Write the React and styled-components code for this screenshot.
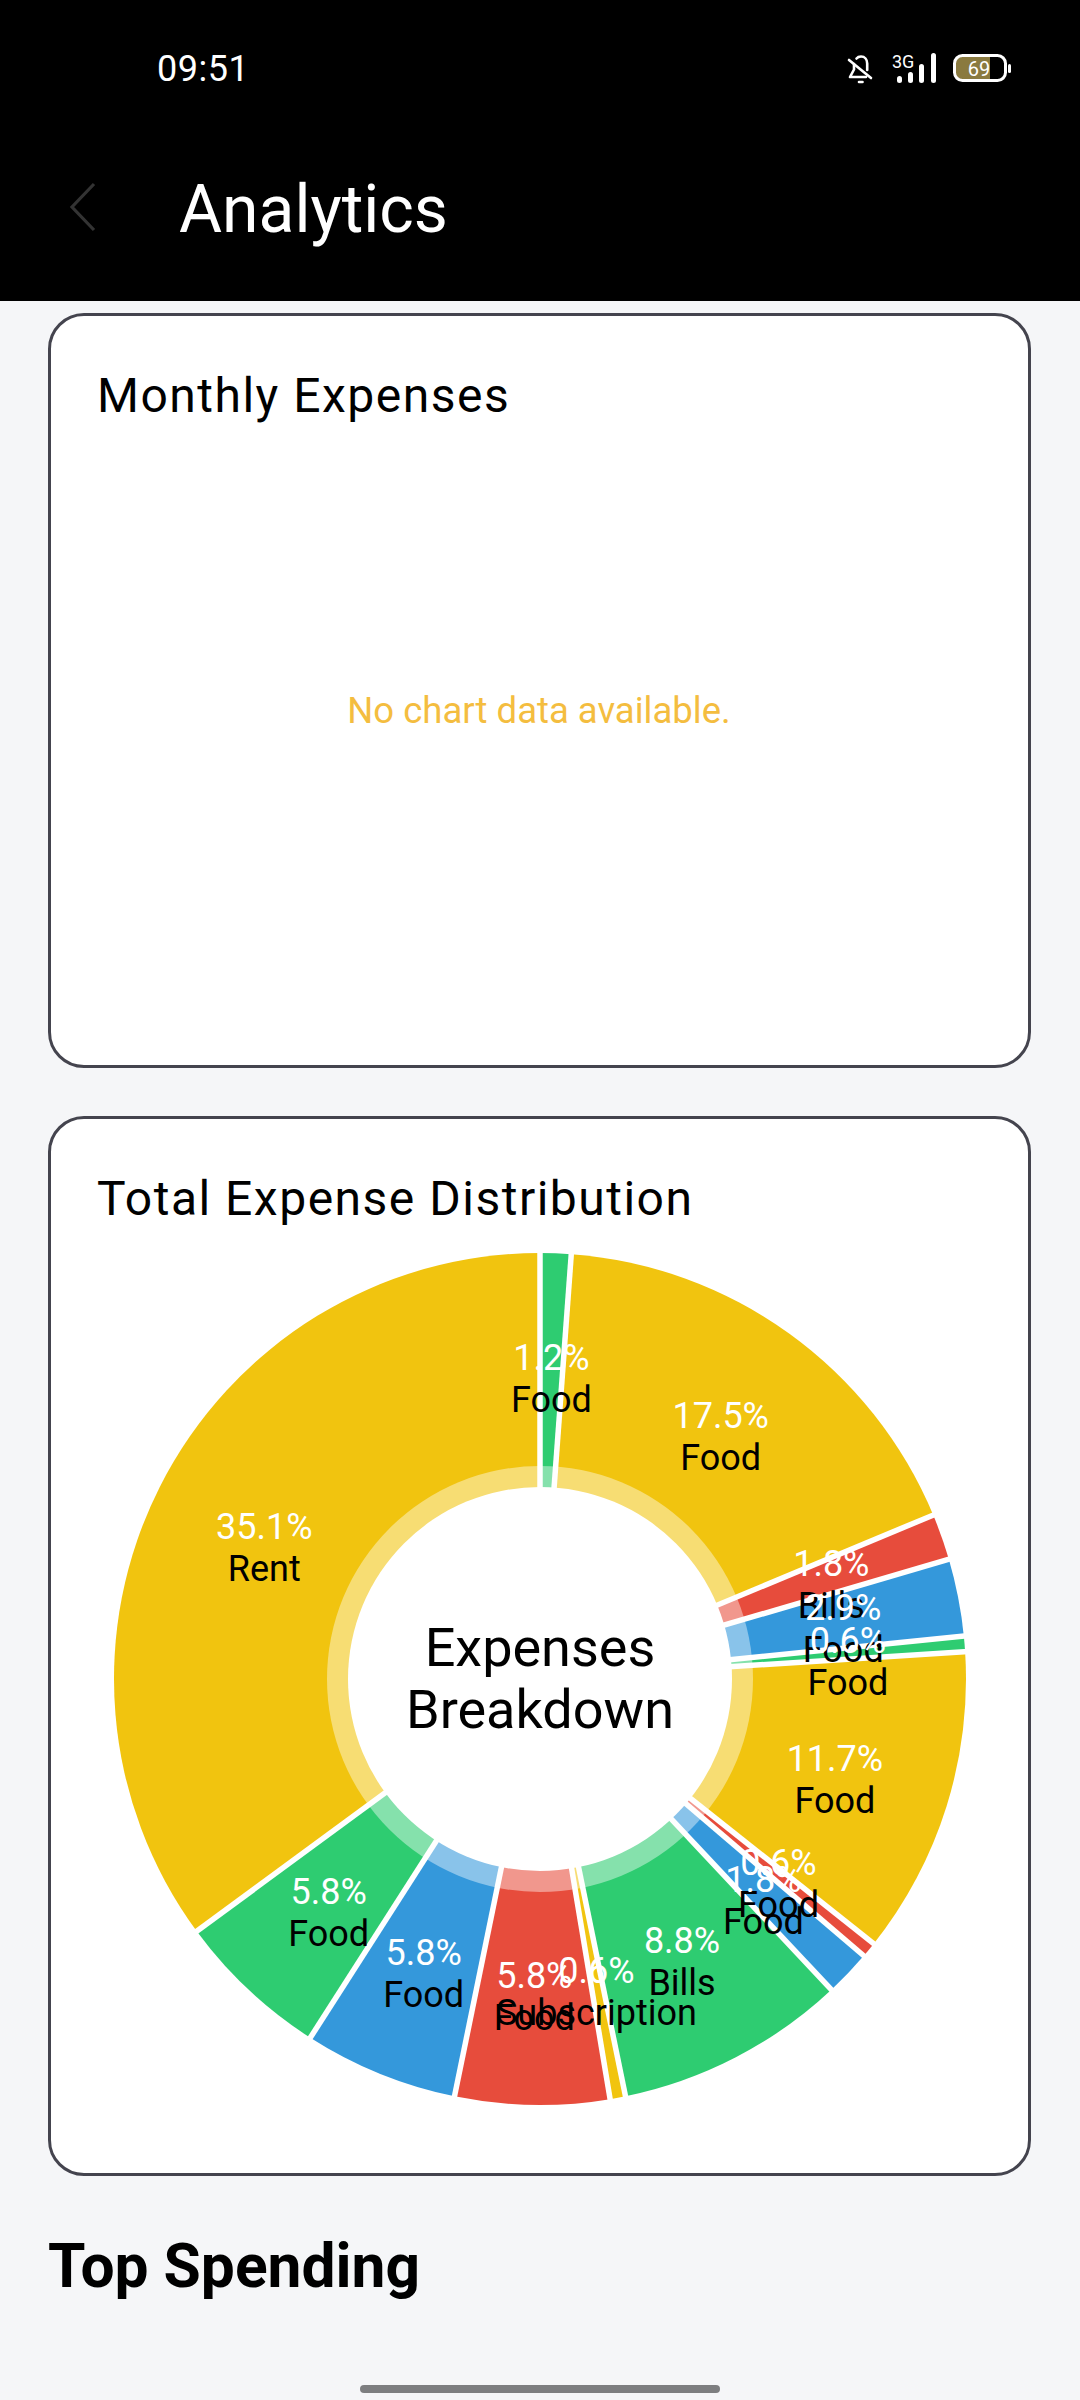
import React from 'react'
import styled, { createGlobalStyle } from 'styled-components'

const GlobalStyle = createGlobalStyle`
  html, body {
    margin: 0;
    padding: 0;
    background: #f5f6f8;
  }
  * {
    box-sizing: border-box;
  }
`

const Screen = styled.div`
  position: relative;
  width: 1080px;
  height: 2400px;
  overflow: hidden;
  background: #f5f6f8;
  font-family: Roboto, sans-serif;
`

const Header = styled.header`
  height: 301px;
  background: #000;
  color: #fff;
  display: flex;
  flex-direction: column;
`

const StatusBar = styled.div`
  height: 136px;
  padding: 48px 65px 0 157px;
  display: flex;
  justify-content: space-between;
  align-items: flex-start;
`

const Time = styled.span`
  font-size: 36px;
  line-height: 43px;
  letter-spacing: 0.5px;
`

const StatusIcons = styled.div`
  display: flex;
  height: 36px;
  margin-top: 2px;
`

const TitleRow = styled.div`
  display: flex;
  align-items: center;
  padding-left: 69px;
  gap: 80px;
  height: 148px;
`

const BackIcon = styled.svg`
  width: 30px;
  height: 52px;
  flex: none;
  margin-bottom: 7px;
`

const Title = styled.h1`
  margin: 0;
  font-size: 66px;
  font-weight: 400;
  line-height: 74px;
`

const Content = styled.main`
  padding: 12px 49px 0 48px;
  display: flex;
  flex-direction: column;
`

const Card = styled.section`
  height: ${(p) => p.$height}px;
  margin-bottom: 48px;
  padding: 52px 47px 0 46px;
  background: #fff;
  border: 3px solid #44444e;
  border-radius: 36px;
  display: flex;
  flex-direction: column;
`

const CardTitle = styled.h2`
  margin: 0;
  font-size: 48px;
  font-weight: 400;
  line-height: 56px;
  letter-spacing: 1.5px;
  color: #000;
`

const Empty = styled.div`
  flex: 1;
  display: flex;
  align-items: center;
  justify-content: center;
  padding-bottom: 68px;
  color: #f4bd3f;
  font-size: 36.5px;
`

const ChartWrap = styled.div`
  position: relative;
  margin: 12px -47px 0 -46px;
`

const Chart = styled.svg`
  display: block;
  width: 977px;
  height: 900px;
`

const PercentText = styled.text`
  font-family: Roboto, sans-serif;
  font-size: 36px;
  fill: #fff;
  text-anchor: middle;
`

const NameText = styled.text`
  font-family: Roboto, sans-serif;
  font-size: 36px;
  fill: #000;
  text-anchor: middle;
`

const CenterLabel = styled.div`
  position: absolute;
  left: 1px;
  right: 0;
  top: 378px;
  text-align: center;
  font-size: 54px;
  line-height: 62px;
  color: #000;
`

const SectionTitle = styled.h2`
  margin: 9px 0 0;
  font-size: 60.5px;
  font-weight: 700;
  line-height: 68px;
  color: #000;
`

const HomeBar = styled.div`
  position: absolute;
  left: 360px;
  bottom: 7px;
  width: 360px;
  height: 8px;
  border-radius: 4px;
  background: #7d7e80;
`

const GREEN = '#2ecc71'
const YELLOW = '#f1c40f'
const RED = '#e74c3c'
const BLUE = '#3498db'

// shares out of 171, clockwise from 12 o'clock
const slices = [
  { share: 2, pct: '1.2%', name: 'Food', color: GREEN },
  { share: 30, pct: '17.5%', name: 'Food', color: YELLOW },
  { share: 3, pct: '1.8%', name: 'Bills', color: RED },
  { share: 5, pct: '2.9%', name: 'Food', color: BLUE },
  { share: 1, pct: '0.6%', name: 'Food', color: GREEN },
  { share: 20, pct: '11.7%', name: 'Food', color: YELLOW },
  { share: 1, pct: '0.6%', name: 'Food', color: RED },
  { share: 3, pct: '1.8%', name: 'Food', color: BLUE },
  { share: 15, pct: '8.8%', name: 'Bills', color: GREEN },
  { share: 1, pct: '0.6%', name: 'Subscription', color: YELLOW },
  { share: 10, pct: '5.8%', name: 'Food', color: RED },
  { share: 10, pct: '5.8%', name: 'Food', color: BLUE },
  { share: 10, pct: '5.8%', name: 'Food', color: GREEN },
  { share: 60, pct: '35.1%', name: 'Rent', color: YELLOW },
]

const CX = 489
const CY = 440
const R = 426
const total = slices.reduce((sum, s) => sum + s.share, 0)

const polar = (r, deg) => {
  const a = (deg * Math.PI) / 180
  return [CX + r * Math.sin(a), CY - r * Math.cos(a)]
}

const wedge = (from, to) => {
  const [x1, y1] = polar(R, from)
  const [x2, y2] = polar(R, to)
  const large = to - from > 180 ? 1 : 0
  return `M${CX} ${CY}L${x1} ${y1}A${R} ${R} 0 ${large} 1 ${x2} ${y2}Z`
}

const withAngles = (() => {
  let start = 0
  return slices.map((s) => {
    const sweep = (s.share / total) * 360
    const item = { ...s, start, end: start + sweep, mid: start + sweep / 2 }
    start += sweep
    return item
  })
})()

const PieChart = () => (
  <ChartWrap>
    <Chart viewBox="0 0 977 900">
      {withAngles.map((s, i) => (
        <path key={i} d={wedge(s.start, s.end)} fill={s.color} />
      ))}
      {withAngles.map((s, i) => {
        const [x, y] = polar(R + 3, s.start)
        return <line key={i} x1={CX} y1={CY} x2={x} y2={y} stroke="#fff" strokeWidth="5.5" />
      })}
      <circle cx={CX} cy={CY} r="213" fill="#fff" fillOpacity="0.42" />
      <circle cx={CX} cy={CY} r="192" fill="#fff" />
      {withAngles.map((s, i) => {
        const [x, y] = polar(309, s.mid)
        return (
          <g key={i}>
            <PercentText x={x} y={y}>{s.pct}</PercentText>
            <NameText x={x} y={y + 42}>{s.name}</NameText>
          </g>
        )
      })}
    </Chart>
    <CenterLabel>Expenses<br />Breakdown</CenterLabel>
  </ChartWrap>
)

const StatusGlyphs = () => (
  <svg width="170" height="36" viewBox="0 0 170 36">
    <g fill="none" stroke="#fff" strokeWidth="2.6" strokeLinecap="round" strokeLinejoin="round">
      <path d="M9 14v5.5L5 27h16" />
      <path d="M11.5 8.5c1-1.2 2.8-2 4.5-2 3.8 0 6.2 3 6.2 7v6.5" />
      <path d="M4 10l22 18" />
      <path d="M14 32h3.5" />
    </g>
    <text x="47" y="18" fontFamily="Roboto, sans-serif" fontSize="18" fill="#fff">3G</text>
    <g fill="#fff">
      <rect x="52" y="26" width="5" height="7" rx="2.5" />
      <rect x="63" y="22" width="5" height="11" rx="2.5" />
      <rect x="74" y="14" width="5" height="19" rx="2.5" />
      <rect x="86" y="3" width="5" height="30" rx="2.5" />
    </g>
    <path d="M116 7h29v22h-29a6 6 0 0 1-6-6v-10a6 6 0 0 1 6-6z" fill="#8a7a3f" />
    <rect x="109.5" y="5.5" width="51" height="25" rx="8" fill="none" stroke="#fff" strokeWidth="3" />
    <rect x="163" y="14" width="3" height="9" rx="1.5" fill="#fff" />
    <text x="134" y="26" textAnchor="middle" fontFamily="Roboto, sans-serif" fontSize="20" fill="#fff">69</text>
  </svg>
)

export default function App() {
  return (
    <Screen>
      <GlobalStyle />
      <Header>
        <StatusBar>
          <Time>09:51</Time>
          <StatusIcons>
            <StatusGlyphs />
          </StatusIcons>
        </StatusBar>
        <TitleRow>
          <BackIcon viewBox="0 0 30 52">
            <path d="M25 3L3 26l22 23" fill="none" stroke="#333" strokeWidth="3.2" />
          </BackIcon>
          <Title>Analytics</Title>
        </TitleRow>
      </Header>
      <Content>
        <Card $height={755}>
          <CardTitle>Monthly Expenses</CardTitle>
          <Empty>No chart data available.</Empty>
        </Card>
        <Card $height={1060}>
          <CardTitle>Total Expense Distribution</CardTitle>
          <PieChart />
        </Card>
        <SectionTitle>Top Spending</SectionTitle>
      </Content>
      <HomeBar />
    </Screen>
  )
}
